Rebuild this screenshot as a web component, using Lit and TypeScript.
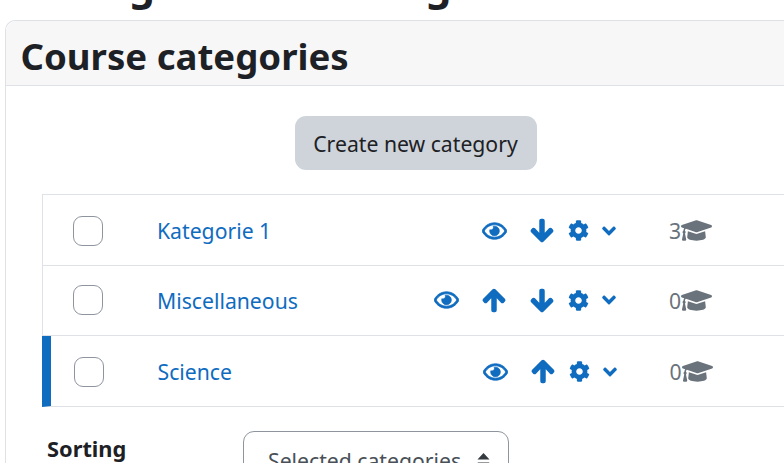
import { LitElement, html, css, svg } from "lit";
import { customElement } from "lit/decorators.js";

const eye = svg`<path d="M288 144a110.94 110.94 0 0 0-31.24 5 55.4 55.4 0 0 1 7.24 27 56 56 0 0 1-56 56 55.4 55.4 0 0 1-27-7.24A111.71 111.71 0 1 0 288 144zm284.52 97.4C518.29 135.59 410.93 64 288 64S57.68 135.64 3.48 241.41a32.35 32.35 0 0 0 0 29.19C57.71 376.41 165.07 448 288 448s230.32-71.64 284.52-177.41a32.35 32.35 0 0 0 0-29.19zM288 400c-98.65 0-189.09-55-237.93-144C98.91 167 189.34 112 288 112s189.09 55 237.93 144C477.1 345 386.66 400 288 400z"/>`;
const down = svg`<path d="M413.1 222.5l22.2 22.2c9.4 9.4 9.4 24.6 0 33.9L241 473c-9.4 9.4-24.6 9.4-33.9 0L12.7 278.6c-9.4-9.4-9.4-24.6 0-33.9l22.2-22.2c9.5-9.5 25-9.3 34.3.4L184 343.4V56c0-13.3 10.7-24 24-24h32c13.3 0 24 10.7 24 24v287.4l114.8-120.5c9.3-9.8 24.8-10 34.3-.4z"/>`;
const up = svg`<path d="M34.9 289.5l-22.2-22.2c-9.4-9.4-9.4-24.6 0-33.9L207 39c9.4-9.4 24.6-9.4 33.9 0l194.3 194.3c9.4 9.4 9.4 24.6 0 33.9L413 289.4c-9.5 9.5-25 9.3-34.3-.4L264 168.6V456c0 13.3-10.7 24-24 24h-32c-13.3 0-24-10.7-24-24V168.6L69.2 289.1c-9.3 9.8-24.8 10-34.3.4z"/>`;
const cog = svg`<path d="M487.4 315.7l-42.6-24.6c4.3-23.2 4.3-47 0-70.2l42.6-24.6c4.9-2.8 7.1-8.6 5.5-14-11.1-35.6-30-67.8-54.7-94.6-3.8-4.1-10-5.1-14.8-2.3L380.8 110c-17.9-15.4-38.5-27.3-60.8-35.1V25.8c0-5.6-3.9-10.5-9.4-11.7-36.7-8.2-74.3-7.8-109.2 0-5.5 1.2-9.4 6.1-9.4 11.7V75c-22.2 7.9-42.8 19.8-60.8 35.1L88.7 85.5c-4.9-2.8-11-1.9-14.8 2.3-24.7 26.7-43.6 58.9-54.7 94.6-1.7 5.4.6 11.2 5.5 14L67.3 221c-4.3 23.2-4.3 47 0 70.2l-42.6 24.6c-4.9 2.8-7.1 8.6-5.5 14 11.1 35.6 30 67.8 54.7 94.6 3.8 4.1 10 5.1 14.8 2.3l42.6-24.6c17.9 15.4 38.5 27.3 60.8 35.1v49.2c0 5.6 3.9 10.5 9.4 11.7 36.7 8.2 74.3 7.8 109.2 0 5.5-1.2 9.4-6.1 9.4-11.7v-49.2c22.2-7.9 42.8-19.8 60.8-35.1l42.6 24.6c4.9 2.8 11 1.9 14.8-2.3 24.7-26.7 43.6-58.9 54.7-94.6 1.5-5.5-.7-11.3-5.6-14.1zM256 336c-44.1 0-80-35.9-80-80s35.9-80 80-80 80 35.9 80 80-35.9 80-80 80z"/>`;
const angle = svg`<path d="M143 352.3L7 216.3c-9.4-9.4-9.4-24.6 0-33.9l22.6-22.6c9.4-9.4 24.6-9.4 33.9 0l96.4 96.4 96.4-96.4c9.4-9.4 24.6-9.4 33.9 0l22.6 22.6c9.4 9.4 9.4 24.6 0 33.9l-136 136c-9.2 9.4-24.4 9.4-33.8 0z"/>`;
const cap = svg`<path d="M622.34 153.2L343.4 67.5c-15.2-4.67-31.6-4.67-46.79 0L17.66 153.2c-23.54 7.23-23.54 38.36 0 45.59l48.63 14.94c-10.67 13.19-17.23 29.28-17.88 46.9C38.78 266.15 32 276.11 32 288c0 10.78 5.68 19.85 13.86 25.65L20.33 428.53C18.11 438.52 25.71 448 35.94 448h56.11c10.24 0 17.84-9.48 15.62-19.47L82.14 313.65C90.32 307.85 96 298.78 96 288c0-11.57-6.47-21.25-15.66-26.87.76-15.02 8.44-28.3 20.69-36.72L296.6 284.5c9.06 2.78 26.44 6.25 46.79 0l278.95-85.7c23.55-7.24 23.55-38.36 0-45.6zM352.79 315.09c-28.53 8.76-52.84 3.92-65.59 0l-145.02-44.55L128 384c0 35.35 85.96 64 192 64s192-28.65 192-64l-14.18-113.47-145.03 44.56z"/>`;

const icon = (vb: string, cls: string, body: unknown, par = "xMidYMid meet") =>
  html`<svg class=${cls} viewBox=${vb} preserveAspectRatio=${par} fill="currentColor" aria-hidden="true">${body}</svg>`;

interface Row { name: string; count: string; up: boolean; down: boolean; active?: boolean; }

const rows: Row[] = [
  { name: "Kategorie 1", count: "3", up: false, down: true },
  { name: "Miscellaneous", count: "0", up: true, down: true },
  { name: "Science", count: "0", up: true, down: false, active: true },
];

@customElement("app-root")
export class AppRoot extends LitElement {
  static styles = css`
    :host {
      display: block;
      width: 784px;
      height: 463px;
      overflow: hidden;
      font-family: "Noto Sans", "Open Sans", sans-serif;
      color: #1d2125;
      background: #fff;
    }
    .page { width: 1100px; }
    .top {
      height: 20px;
      box-sizing: border-box;
      overflow: hidden;
      display: flex;
      align-items: flex-end;
      padding: 0 0 12px 14.5px;
      font-size: 41px;
      line-height: 48px;
      font-weight: 700;
      white-space: nowrap;
    }
    .card {
      margin-left: 5px;
      border: 1.5px solid #dee2e6;
      border-radius: 10px 0 0 0;
      border-right: none;
      border-bottom: none;
    }
    .head {
      height: 65px;
      box-sizing: border-box;
      display: flex;
      align-items: center;
      padding: 5px 0 0 14.5px;
      background: #f7f7f7;
      border-bottom: 1.5px solid #dee2e6;
      border-radius: 10px 0 0 0;
      font-size: 36.6px;
      font-weight: 700;
    }
    .create { width: 819px; display: flex; justify-content: center; padding: 30px 0 24px; }
    .btn {
      height: 54px;
      width: 242px;
      border: none;
      border-radius: 11px;
      background: #ced4da;
      color: #1d2125;
      font: inherit;
      font-size: 21.2px;
      padding: 1px 0 0;
    }
    .list { margin-left: 35.5px; border-top: 1.5px solid #dee2e6; }
    .row {
      height: 70.5px;
      box-sizing: border-box;
      display: flex;
      align-items: center;
      padding-top: 2px;
      border-left: 1.5px solid #dee2e6;
      border-bottom: 1.5px solid #dee2e6;
      font-size: 21.2px;
    }
    .row:nth-child(2) { padding-top: 0; }
    .row.active { border-left: 9px solid #0f6cbf; }
    .checkcell { width: 114.5px; flex: none; padding-left: 30px; box-sizing: border-box; }
    .active .checkcell { width: 107px; padding-left: 23px; }
    .check {
      display: block;
      width: 30px;
      height: 30px;
      box-sizing: border-box;
      border: 1.5px solid #8f959e;
      border-radius: 9px;
      background: #fff;
    }
    .name { width: 225px; flex: none; color: #0f6cbf; white-space: nowrap; }
    .actions {
      width: 237px;
      flex: none;
      display: flex;
      justify-content: flex-end;
      align-items: center;
      color: #0f6cbf;
    }
    .slot { width: 48px; display: flex; flex: none; }
    .slot.last { width: 37px; }
    .eye { width: 25px; height: 22px; margin-left: -1px; stroke: currentColor; stroke-width: 18; }
    .arrow { width: 22px; height: 25px; stroke: currentColor; stroke-width: 32; stroke-linejoin: round; overflow: visible; }
    .cog { width: 21px; height: 21px; margin-right: 13px; flex: none; }
    .angle { width: 14px; height: 22px; margin-right: 3px; flex: none; }
    .count { margin-left: 50px; color: #6a737b; width: 12px; flex: none; }
    .cap { width: 31px; height: 27px; flex: none; color: #6a737b; }
    .sort { display: flex; padding: 24px 0 0 41px; }
    .sort-label { width: 196px; flex: none; font-size: 21.8px; font-weight: 700; line-height: 36px; }
    .select {
      width: 266px;
      height: 60px;
      box-sizing: border-box;
      border: 1.5px solid #8f959e;
      border-radius: 11px;
      display: flex;
      align-items: center;
      justify-content: space-between;
      padding: 0 18px 0 24px;
      font-size: 21.2px;
      color: #495057;
    }
    .updown { width: 13px; height: 16px; color: #343a40; flex: none; }
  `;

  private renderRow(r: Row) {
    return html`<div class="row ${r.active ? "active" : ""}">
      <div class="checkcell"><span class="check"></span></div>
      <div class="name">${r.name}</div>
      <div class="actions">
        <div class="slot">${icon("0 0 576 512", "eye", eye)}</div>
        ${r.up ? html`<div class="slot ${r.down ? "" : "last"}">${icon("0 0 448 512", "arrow", up)}</div>` : ""}
        ${r.down ? html`<div class="slot last">${icon("0 0 448 512", "arrow", down)}</div>` : ""}
        ${icon("0 0 512 512", "cog", cog)}
        ${icon("0 0 320 512", "angle", angle)}
      </div>
      <div class="count">${r.count}</div>
      ${icon("0 0 640 512", "cap", cap, "none")}
    </div>`;
  }

  render() {
    return html`<div class="page">
      <div class="top">Manage course categories</div>
      <div class="card">
        <div class="head">Course categories</div>
        <div class="create"><button class="btn">Create new category</button></div>
        <div class="list">${rows.map((r) => this.renderRow(r))}</div>
        <div class="sort">
          <div class="sort-label">Sorting</div>
          <div class="select">
            <span>Selected categories</span>
            <svg class="updown" viewBox="0 0 13 16" fill="currentColor"><path d="M6.5 0L12.5 6.5H.5zM6.5 16L.5 9.5h12z"/></svg>
          </div>
        </div>
      </div>
    </div>`;
  }
}
